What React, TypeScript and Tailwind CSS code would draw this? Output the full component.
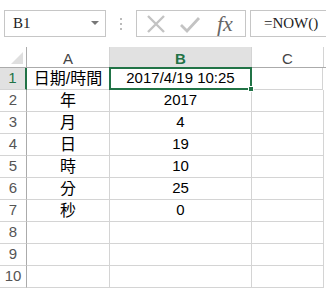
import React from "react";

const rows: [string, string][] = [
  ["日期/時間", "2017/4/19 10:25"],
  ["年", "2017"],
  ["月", "4"],
  ["日", "19"],
  ["時", "10"],
  ["分", "25"],
  ["秒", "0"],
  ["", ""],
  ["", ""],
  ["", ""],
];

const cjk = { fontFamily: '"Liberation Sans", "Noto Sans CJK TC", sans-serif' };

export default function App() {
  return (
    <div className="w-[326px] h-[290px] overflow-hidden bg-white relative" style={cjk}>
      {/* formula bar */}
      <div className="flex items-start h-[47px] pl-[4px] pt-[10px]">
        <div className="w-[102px] h-[27px] border border-[#c6c6c6] flex items-center justify-between pl-[8px] pr-[6px]">
          <span className="text-[15px] text-[#222]" style={{ fontFamily: '"Liberation Serif", serif' }}>B1</span>
          <svg width="8" height="5" viewBox="0 0 8 5">
            <path d="M0 0 L8 0 L4 4 Z" fill="#777" />
          </svg>
        </div>
        <div className="w-[30px] h-[27px] flex flex-col items-center justify-center gap-[3px]">
          <div className="w-[2px] h-[2px] bg-[#bbb]" />
          <div className="w-[2px] h-[2px] bg-[#bbb]" />
          <div className="w-[2px] h-[2px] bg-[#bbb]" />
        </div>
        <div className="w-[110px] h-[27px] border border-[#c6c6c6] flex items-center">
          <svg className="ml-[8px]" width="22" height="22" viewBox="0 0 22 22">
            <path d="M3 3 L19 19 M19 3 L3 19" stroke="#c3c3c3" strokeWidth="2.4" />
          </svg>
          <svg className="ml-[12px]" width="22" height="20" viewBox="0 0 22 20">
            <path d="M2 11 L8 17 L20 4" stroke="#c3c3c3" strokeWidth="2.8" fill="none" />
          </svg>
          <span
            className="ml-[16px] text-[22px] italic text-[#666] leading-none"
            style={{ fontFamily: '"Liberation Serif", serif' }}
          >
            fx
          </span>
        </div>
        <div className="ml-[4px] flex-1 h-[27px] border border-[#c6c6c6] border-r-0 flex items-center pl-[13px]">
          <span className="text-[15px] text-[#222]" style={{ fontFamily: '"Liberation Serif", serif' }}>=NOW()</span>
        </div>
      </div>

      {/* header row */}
      <div className="flex h-[21px] border-b border-[#ababab]">
        <div className="w-[27px] shrink-0 border-r border-[#ababab] flex items-end justify-end pr-[3px] pb-[3px]">
          <svg width="12" height="12" viewBox="0 0 12 12">
            <path d="M12 0 L12 12 L0 12 Z" fill="#dfdfdf" />
          </svg>
        </div>
        <div className="w-[83px] shrink-0 border-r border-[#d4d4d4] flex items-end justify-center text-[15px] leading-[16px] text-[#444]">A</div>
        <div className="w-[142px] shrink-0 bg-[#e1e1e1] border-r border-[#d4d4d4] flex items-end justify-center text-[15px] leading-[16px] font-bold text-[#217346]">B</div>
        <div className="w-[72px] shrink-0 border-r border-[#d4d4d4] flex items-end justify-center text-[15px] leading-[16px] text-[#444]">C</div>
      </div>

      {rows.map(([a, b], i) => (
        <div key={i} className="flex h-[22px]">
          <div
            className={
              i === 0
                ? "w-[27px] shrink-0 bg-[#e1e1e1] border-r-2 border-[#217346] border-b border-b-[#d4d4d4] flex items-center justify-center text-[15px] text-[#217346]"
                : "w-[27px] shrink-0 border-r border-[#ababab] border-b border-b-[#d4d4d4] flex items-center justify-center text-[15px] text-[#555]"
            }
          >
            {i + 1}
          </div>
          <div className="w-[83px] shrink-0 border-r border-b border-[#d4d4d4] flex items-center justify-center text-[16px] text-black">
            {a}
          </div>
          <div
            className={
              i === 0
                ? "shrink-0 border-2 border-[#217346] -mt-px -ml-px w-[143px] h-[23px] relative flex items-center justify-center text-[15px] text-black"
                : "w-[142px] shrink-0 border-r border-b border-[#d4d4d4] flex items-center justify-center text-[15px] text-black"
            }
          >
            {b}
            {i === 0 && (
              <div className="absolute -right-[4px] -bottom-[4px] w-[6px] h-[6px] bg-[#217346] border border-white" />
            )}
          </div>
          <div className={i === 0 ? "w-[71px] shrink-0 border-r border-b border-[#d4d4d4]" : "w-[72px] shrink-0 border-r border-b border-[#d4d4d4]"} />
        </div>
      ))}
    </div>
  );
}
